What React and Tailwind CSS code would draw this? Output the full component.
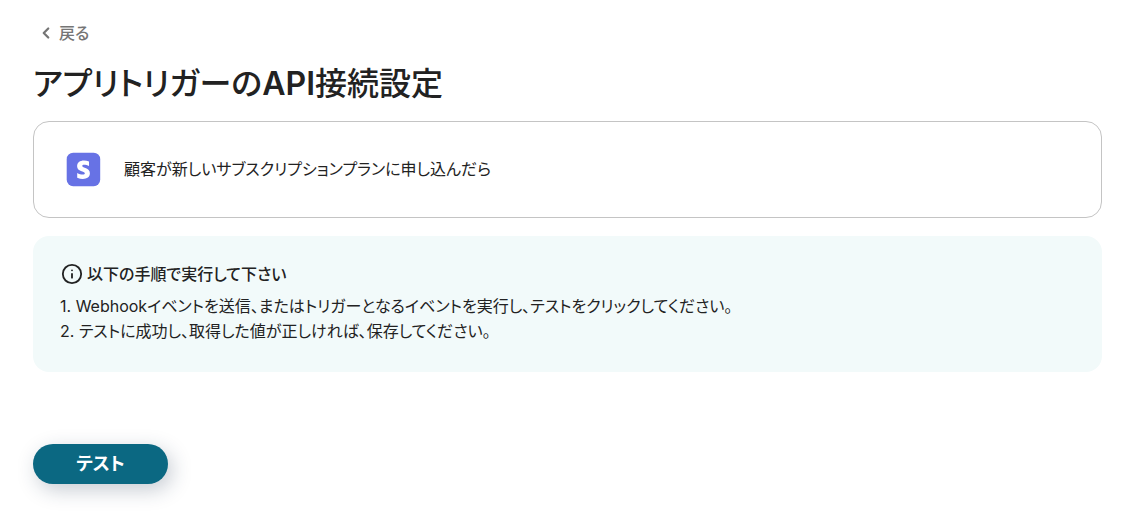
import { ChevronLeft, Info } from "lucide-react";

const steps = [
  "Webhookイベントを送信、またはトリガーとなるイベントを実行し、テストをクリックしてください。",
  "テストに成功し、取得した値が正しければ、保存してください。",
];

function StripeIcon() {
  return (
    <svg viewBox="0 0 36 36" className="size-9 shrink-0" aria-hidden="true">
      <rect x="0.700" y="1.700" width="33.500" height="33.500" rx="6.500" fill="#6772e5" />
      <path
        fill="#fff"
        d="M16.300 14.900c0-.8.7-1.100 1.700-1.100 1.500 0 3.500.5 5 1.300V10.400c-1.700-.7-3.300-.9-5-.9-4.100 0-6.900 2.100-6.900 5.700 0 5.600 7.700 4.700 7.700 7.100 0 1-.8 1.300-2 1.300-1.700 0-3.900-.7-5.600-1.700v4.800c1.900.8 3.800 1.200 5.600 1.200 4.200 0 7.100-2.100 7.100-5.700 0-6-7.600-5-7.600-7.300z"
      />
    </svg>
  );
}

function App() {
  return (
    <main className="pt-[21px] pr-[31px] pb-12 pl-[33px] text-[#222] font-[Inter,'Noto_Sans_CJK_JP',sans-serif] [font-feature-settings:'palt']">
      {/* Back */}
      <button className="flex items-center gap-1 px-1 text-base leading-6 font-medium text-[#757575]">
        <ChevronLeft className="size-[18px]" strokeWidth={3} />
        戻る
      </button>

      <h1 className="mt-[15px] mb-[13px] text-[32px] leading-12 font-medium">
        アプリトリガーの<span className="font-semibold">API</span>接続設定
      </h1>

      {/* Trigger */}
      <section className="flex items-center gap-[22px] rounded-2xl border border-[#c4c4c4] px-8 pt-[29px] pb-[30px]">
        <StripeIcon />
        <p className="text-base">顧客が新しいサブスクリプションプランに申し込んだら</p>
      </section>

      {/* Instructions */}
      <section className="mt-[18px] rounded-2xl bg-[#f2fafa] px-[27px] pt-[26px] pb-7">
        <h2 className="mb-2 flex items-center gap-1 text-base leading-6 font-medium">
          <Info className="ml-px size-[22px]" />
          以下の手順で実行して下さい
        </h2>
        <ol className="text-base leading-[25px]">
          {steps.map((step, i) => (
            <li key={step}>
              {i + 1}. {step}
            </li>
          ))}
        </ol>
      </section>

      <button className="mt-[72px] h-10 w-[135px] rounded-full bg-[#0b6882] text-lg font-bold text-white shadow-[4px_6px_20px_rgba(30,50,80,0.25)]">
        テスト
      </button>
    </main>
  );
}

export default App;
